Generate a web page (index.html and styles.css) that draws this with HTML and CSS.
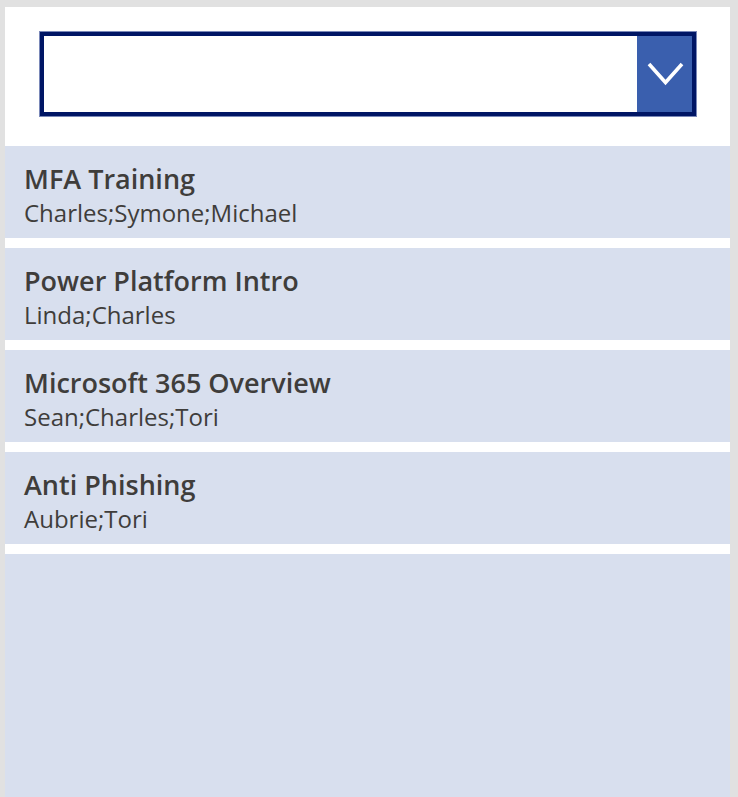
FILE: index.html
```html
<!DOCTYPE html>
<html>
<head>
<meta charset="utf-8">
<link rel="stylesheet" href="styles.css">
</head>
<body>
<div class="canvas">
  <div class="header">
    <div class="dropdown">
      <div class="field"></div>
      <div class="button">
        <svg width="55" height="76" viewBox="0 0 55 76">
          <polyline points="12,28 28.5,46.5 45,28" fill="none" stroke="#ffffff" stroke-width="3.6"/>
        </svg>
      </div>
    </div>
  </div>
  <div class="list">
    <div class="item">
      <div class="title">MFA Training</div>
      <div class="sub">Charles;Symone;Michael</div>
    </div>
    <div class="item">
      <div class="title">Power Platform Intro</div>
      <div class="sub">Linda;Charles</div>
    </div>
    <div class="item">
      <div class="title">Microsoft 365 Overview</div>
      <div class="sub">Sean;Charles;Tori</div>
    </div>
    <div class="item">
      <div class="title">Anti Phishing</div>
      <div class="sub">Aubrie;Tori</div>
    </div>
  </div>
</div>
</body>
</html>
```
FILE: styles.css
```css
html, body {
  margin: 0;
  padding: 0;
  background: #e1e1e1;
  height: 100%;
  overflow: hidden;
}
body {
  font-family: "Open Sans", "Noto Sans", sans-serif;
  padding: 7px 0 0 5px;
  box-sizing: border-box;
}
.canvas {
  width: 725px;
  height: 790px;
  background: #ffffff;
  display: flex;
  flex-direction: column;
}
.header {
  height: 139px;
  padding: 25px 0 0 35px;
  box-sizing: border-box;
}
.dropdown {
  width: 656px;
  height: 84px;
  box-sizing: border-box;
  border: 4px solid #001665;
  box-shadow: 0 0 0 1px #7a88b8;
  display: flex;
  background: #ffffff;
}
.field {
  flex: 1;
}
.button {
  width: 55px;
  height: 76px;
  background: #3a5fae;
  display: flex;
}
.list {
  flex: 1;
  background: #d8dfee;
  display: flex;
  flex-direction: column;
}
.item {
  height: 92px;
  box-sizing: content-box;
  border-bottom: 10px solid #ffffff;
  padding: 0 0 0 19px;
  display: flex;
  flex-direction: column;
}
.title {
  margin-top: 17px;
  font-size: 27px;
  font-weight: 600;
  line-height: 32px;
  color: #3f3d3b;
  white-space: nowrap;
}
.sub {
  margin-top: 3px;
  font-size: 24px;
  font-weight: 400;
  line-height: 30px;
  color: #3f3d3b;
  white-space: nowrap;
}
```
